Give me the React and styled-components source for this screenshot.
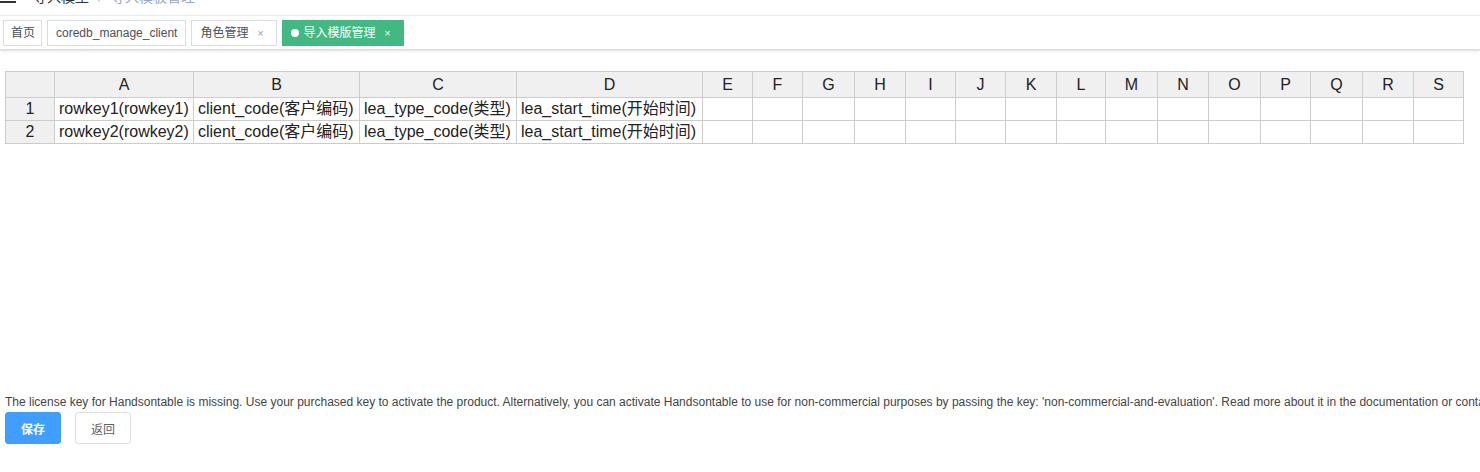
import React from "react";
import styled, { createGlobalStyle } from "styled-components";

const Global = createGlobalStyle`
  html, body { margin: 0; padding: 0; background: #fff; }
  body { font-family: "Liberation Sans", Arial, "Noto Sans CJK SC", sans-serif; color: #333; overflow: hidden; }
  * { box-sizing: border-box; }
`;

const Page = styled.div`
  width: 1480px;
  height: 472px;
  overflow: hidden;
  display: flex;
  flex-direction: column;
`;

const Navbar = styled.div`
  height: 16px;
  overflow: hidden;
  border-bottom: 1px solid #f2f2f2;
  flex-shrink: 0;
`;

const NavInner = styled.div`
  margin-top: -11px;
  height: 16px;
  display: flex;
  align-items: center;
  font-size: 14px;
  line-height: 16px;
`;

const Hamburger = styled.svg`
  width: 16px;
  height: 16px;
  margin-right: 17px;
  flex-shrink: 0;
`;

const Crumb = styled.span`
  color: ${(p) => (p.$last ? "#97a8be" : "#303133")};
`;

const CrumbSep = styled.span`
  color: #c0c4cc;
  margin: 0 9px;
`;

const TagsBar = styled.div`
  height: 34px;
  flex-shrink: 0;
  display: flex;
  align-items: flex-start;
  padding-left: 3px;
  gap: 5px;
  border-bottom: 1px solid #d8dce5;
  box-shadow: 0 1px 3px 0 rgba(0, 0, 0, 0.12), 0 0 3px 0 rgba(0, 0, 0, 0.04);
`;

const Tag = styled.div`
  margin-top: 4px;
  height: 26px;
  line-height: 24px;
  padding: ${(p) => (p.$compact ? "0 6px 0 7px" : "0 8px")};
  font-size: 12px;
  display: flex;
  align-items: center;
  white-space: nowrap;
  border: 1px solid ${(p) => (p.$active ? "#42b983" : "#d8dce5")};
  background: ${(p) => (p.$active ? "#42b983" : "#fff")};
  color: ${(p) => (p.$active ? "#fff" : "#495060")};
`;

const Dot = styled.span`
  width: 8px;
  height: 8px;
  border-radius: 50%;
  background: #fff;
  margin-right: 4px;
  display: inline-block;
`;

const Close = styled.span`
  width: 16px;
  height: 16px;
  margin-left: 4px;
  display: inline-flex;
  align-items: center;
  justify-content: center;
  font-size: 11px;
  line-height: 16px;
  color: ${(p) => (p.$active ? "#e8f7f0" : "#9aa0a8")};
`;

const Main = styled.div`
  padding: 21px 0 0 5px;
  display: flex;
  flex-direction: column;
`;

const HotArea = styled.div`
  height: 322px;
`;

const Grid = styled.div`
  display: grid;
  grid-template-columns: 50px 139px 166px 157px 186px 50px 50px 52px 51px 50px 50px 51px 49px 52px 51px 52px 50px 52px 51px 50px;
  width: max-content;
  border-top: 1px solid #ccc;
  font-size: 16px;
  color: #222;
`;

const Cell = styled.div`
  height: ${(p) => (p.$colHead ? "26px" : "23px")};
  line-height: ${(p) => (p.$colHead ? "25px" : "22px")};
  border-right: 1px solid #ccc;
  border-bottom: 1px solid #ccc;
  border-left: ${(p) => (p.$first ? "1px solid #ccc" : "none")};
  background: ${(p) => (p.$colHead || p.$rowHead ? "#f0f0f0" : "#fff")};
  text-align: ${(p) => (p.$colHead || p.$rowHead ? "center" : "left")};
  padding: 0 4px;
  white-space: nowrap;
  overflow: hidden;
`;

const License = styled.div`
  font-size: 12px;
  line-height: 18px;
  color: #444;
  white-space: nowrap;
  overflow: hidden;
`;

const Actions = styled.div`
  margin-top: 1px;
  display: flex;
  gap: 14px;
`;

const Button = styled.button`
  width: 56px;
  height: 32px;
  border-radius: 3px;
  font-size: 12px;
  font-family: inherit;
  padding: 0;
  cursor: pointer;
  border: 1px solid ${(p) => (p.$primary ? "#409eff" : "#dcdfe6")};
  background: ${(p) => (p.$primary ? "#409eff" : "#fff")};
  color: ${(p) => (p.$primary ? "#fff" : "#606266")};
  font-weight: ${(p) => (p.$primary ? "bold" : "normal")};
`;

const cols = "ABCDEFGHIJKLMNOPQRS".split("");
const rows = [
  ["rowkey1(rowkey1)", "client_code(客户编码)", "lea_type_code(类型)", "lea_start_time(开始时间)"],
  ["rowkey2(rowkey2)", "client_code(客户编码)", "lea_type_code(类型)", "lea_start_time(开始时间)"],
];

export default function App() {
  return (
    <Page>
      <Global />
      <Navbar>
        <NavInner>
          <Hamburger viewBox="0 0 16 16">
            <rect x="0" y="2" width="16" height="2" fill="#333" />
            <rect x="0" y="7" width="16" height="2" fill="#333" />
            <rect x="0" y="12" width="16" height="2" fill="#333" />
          </Hamburger>
          <Crumb>导入模型</Crumb>
          <CrumbSep>/</CrumbSep>
          <Crumb $last>导入模板管理</Crumb>
        </NavInner>
      </Navbar>
      <TagsBar>
        <Tag $compact>首页</Tag>
        <Tag>coredb_manage_client</Tag>
        <Tag>
          角色管理<Close>×</Close>
        </Tag>
        <Tag $active>
          <Dot />
          导入模版管理<Close $active>×</Close>
        </Tag>
      </TagsBar>
      <Main>
        <HotArea>
          <Grid>
            <Cell $colHead $first />
            {cols.map((c) => (
              <Cell $colHead key={c}>
                {c}
              </Cell>
            ))}
            {rows.map((r, i) => (
              <React.Fragment key={i}>
                <Cell $rowHead $first>
                  {i + 1}
                </Cell>
                {cols.map((c, j) => (
                  <Cell key={c}>{r[j] || ""}</Cell>
                ))}
              </React.Fragment>
            ))}
          </Grid>
        </HotArea>
        <License>
          The license key for Handsontable is missing. Use your purchased key to activate the product. Alternatively, you can activate Handsontable to use for non-commercial purposes by passing the key: 'non-commercial-and-evaluation'. Read more about it in the documentation or contact us at support@handsontable.com.
        </License>
        <Actions>
          <Button $primary>保存</Button>
          <Button>返回</Button>
        </Actions>
      </Main>
    </Page>
  );
}
